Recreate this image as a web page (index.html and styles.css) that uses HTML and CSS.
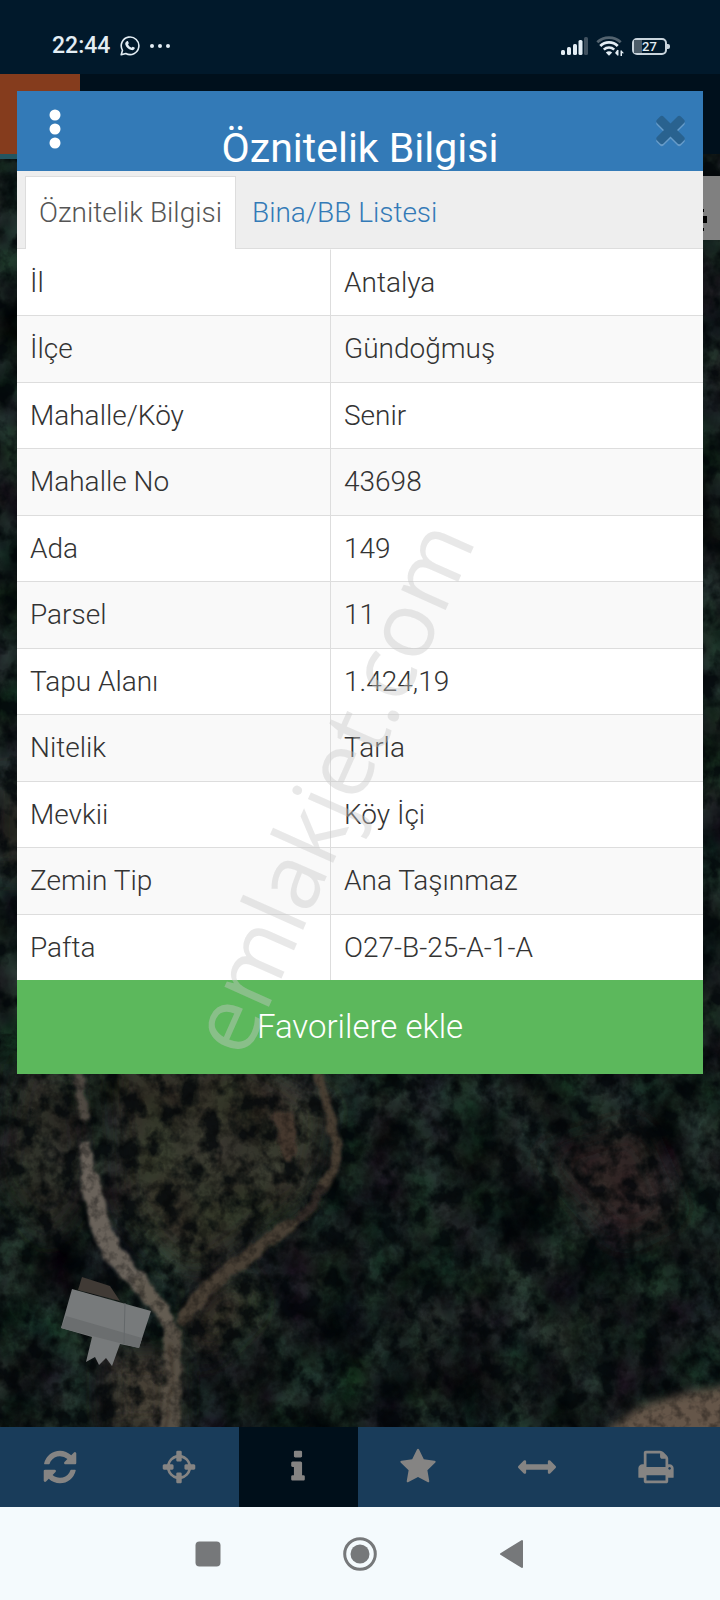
FILE: index.html
```html
<!DOCTYPE html>
<html lang="tr">

<head>
  <meta charset="UTF-8">
  <meta name="viewport" content="width=device-width, initial-scale=1.0">
  <title>Parsel Sorgu - Öznitelik Bilgisi</title>
  <link rel="stylesheet" href="styles.css">
</head>

<body>
  <header class="status-bar">
    <div class="status-left">
      <span class="clock">22:44</span>
      <svg class="status-whatsapp" width="20" height="20" viewBox="0 0 20 20" aria-hidden="true">
        <path d="M1.2 18.8l1.3-4.5a8.8 8.8 0 1 1 3.3 3.2z" fill="none" stroke="currentColor" stroke-width="1.6" stroke-linejoin="round" />
        <path d="M6.9 5.2c.5-.3 1-.2 1.2.3l.7 1.6c.1.4-.6 1.1-.7 1.4.7 1.500 1.800 2.500 3.300 3.200.4-.1 1-1 1.400-.9l1.700.8c.4.2.3.7.1 1.200-.6 1.200-2 1.600-3.300 1.200-3-.9-5.100-2.900-6-5.600-.3-1.200.5-2.600 1.600-3.200z" fill="currentColor" />
      </svg>
      <svg width="20" height="20" viewBox="0 0 20 20" aria-hidden="true">
        <circle cx="2" cy="10" r="2" fill="currentColor" />
        <circle cx="10" cy="10" r="2" fill="currentColor" />
        <circle cx="18" cy="10" r="2" fill="currentColor" />
      </svg>
    </div>
    <div class="status-right">
      <svg width="27" height="18" viewBox="0 0 27 18" aria-hidden="true">
        <rect x="0" y="13" width="4" height="5" rx="1.5" fill="currentColor" />
        <rect x="6" y="10" width="4" height="8" rx="1.5" fill="currentColor" />
        <rect x="12" y="7" width="4" height="11" rx="1.5" fill="currentColor" />
        <rect x="17.5" y="3" width="4" height="15" rx="1.5" fill="currentColor" />
        <rect x="23" y="0" width="4" height="18" rx="1.5" fill="#40515f" />
      </svg>
      <svg width="28" height="20" viewBox="0 0 28 20" aria-hidden="true">
        <g fill="none">
          <path d="M1.300 6.300a17 17 0 0 1 23.400 0" stroke="#53636f" stroke-width="2.800" />
          <path d="M4.300 9.900a12.300 12.300 0 0 1 17.400 0" stroke="currentColor" stroke-width="2.800" />
          <path d="M7.800 13.600a7.500 7.500 0 0 1 10.400 0" stroke="currentColor" stroke-width="2.600" />
        </g>
        <path d="M13 19.800l-3.200-3.400q3.200-2.400 6.400 0z" fill="currentColor" />
        <path d="M21.500 13.500v6l-2.500-2.500zM21 14h1.500v5.500h-1.500zM24.500 14.500h1.500v5.500h-1.500zM25.500 14.500l2.500 2.800h-2.500z" fill="currentColor" />
      </svg>
      <span class="battery"><span class="battery-level">27</span></span>
    </div>
  </header>

  <main class="app">
    <svg class="map" viewBox="0 0 720 1353" preserveAspectRatio="xMidYMid slice" aria-hidden="true">
      <defs>
        <filter id="trees" x="0" y="0" width="100%" height="100%" color-interpolation-filters="sRGB">
          <feTurbulence type="fractalNoise" baseFrequency="0.022 0.018" numOctaves="6" seed="12" />
          <feColorMatrix values="0.16 0.14 0 0 -0.06
                                 0.08 0.30 0 0 -0.06
                                 0.14 0.18 0.06 0 -0.07
                                 0 0 0 0 1" />
        </filter>
        <filter id="shade" x="0" y="0" width="100%" height="100%" color-interpolation-filters="sRGB">
          <feTurbulence type="fractalNoise" baseFrequency="0.05 0.045" numOctaves="4" seed="31" />
          <feColorMatrix values="0 0 0 0 0
                                 0 0 0 0 0.02
                                 0 0 0 0 0.03
                                 4 0 0 0 -1.75" />
        </filter>
        <filter id="grain" x="0" y="0" width="100%" height="100%" color-interpolation-filters="sRGB">
          <feTurbulence type="fractalNoise" baseFrequency="0.11" numOctaves="3" seed="5" />
          <feColorMatrix values="0 0 0 0 0.02
                                 0 0 0 0 0.02
                                 0 0 0 0 0.02
                                 3 0 0 0 -1.3" />
        </filter>
        <filter id="rough" x="-10%" y="-10%" width="120%" height="120%">
          <feTurbulence type="fractalNoise" baseFrequency="0.08" numOctaves="3" seed="4" result="n" />
          <feDisplacementMap in="SourceGraphic" in2="n" scale="9" xChannelSelector="R" yChannelSelector="G" />
          <feGaussianBlur stdDeviation="1.5" />
        </filter>
        <filter id="soft" x="-40%" y="-40%" width="180%" height="180%">
          <feGaussianBlur stdDeviation="14" />
        </filter>
        <filter id="edge" x="-20%" y="-20%" width="140%" height="140%">
          <feGaussianBlur stdDeviation="5" />
        </filter>
      </defs>
      <rect width="720" height="1353" filter="url(#trees)" />

      <!-- bare soil -->
      <g filter="url(#soft)">
        <path d="M110 980L250 980L330 1030L310 1120L200 1200L170 1190L120 1130Z" fill="#4a4034" opacity=".6" />
        <path d="M20 990h60l10 120l-40 60l-50-60Z" fill="#3e372c" opacity=".6" />
        <path d="M540 1080L640 1050L680 1140L620 1170Z" fill="#3a2a27" opacity=".7" />
        <path d="M190 1240l50-40l20 30l-60 60z" fill="#4c4034" opacity=".7" />
        <path d="M110 1280h66v80h-66z" fill="#4a4236" opacity=".9" />
        <path d="M0 700h30v100h-30z" fill="#3f3831" opacity=".6" />
      </g>
      <rect width="720" height="1353" filter="url(#shade)" opacity=".75" />

      <!-- roads -->
      <g fill="none" stroke-linecap="round" stroke-linejoin="round" filter="url(#rough)">
        <path d="M318 1000L328 1032L336 1070L335 1092L322 1115" stroke="#463d33" stroke-width="10" />
        <path d="M322 1115L308 1138L290 1150" stroke="#302c25" stroke-width="9" />
        <path d="M290 1150L262 1172L230 1195L205 1217L182 1244" stroke="#4a4135" stroke-width="14" />
        <path d="M78 990L80 1020L85 1044" stroke="#504a42" stroke-width="9" />
        <path d="M85 1072L90 1105" stroke="#69625a" stroke-width="11" />
        <path d="M90 1105L100 1150L113 1180L140 1210" stroke="#69625a" stroke-width="19" />
        <path d="M140 1210L163 1236L172 1262" stroke="#635b51" stroke-width="14" />
        <path d="M173 1262L173 1300L168 1360" stroke="#575044" stroke-width="17" />
        <path d="M171 1270L172 1300L167 1360" stroke="#41392f" stroke-width="3" />
        <path d="M277 1042L290 1042L294 1070L288 1084Z" stroke="#44382f" stroke-width="8" fill="#44382f" />
      </g>
      <path d="M590 1370L640 1332L690 1318L740 1310V1370Z" fill="#655649" filter="url(#edge)" />
      <rect y="960" width="720" height="393" filter="url(#grain)" opacity=".35" />

      <!-- house -->
      <path d="M78 1216L82 1203L110 1212L120 1227Z" fill="#403a35" />
      <path d="M72 1215L151 1237L139 1274L120 1270L112 1292L106 1284L99 1291L95 1283L86 1288L92 1263L61 1254Z" fill="#777a7b" />
      <path d="M66 1242L142 1264L139 1274L61 1254Z" fill="#6b6e6f" />
      <path d="M125 1229L124 1270" stroke="#64686a" stroke-width="1" />
    </svg>

    <div class="app-header">
      <span class="app-logo"></span>
    </div>
    <button class="map-control" type="button" aria-label="Katmanlar">
      <svg width="40" height="48" viewBox="0 0 40 48" aria-hidden="true">
        <path d="M0 32h34v7H0zM28 25h3v3h-3zM28 44h3v3h-3z" />
      </svg>
    </button>

    <section class="modal" role="dialog" aria-labelledby="modalTitle">
      <div class="modal-header">
        <button class="menu-btn" type="button" aria-label="Menü">
          <svg width="12" height="40" viewBox="0 0 12 40" aria-hidden="true">
            <circle cx="6" cy="6" r="5.500" />
            <circle cx="6" cy="20" r="5.500" />
            <circle cx="6" cy="34" r="5.500" />
          </svg>
        </button>
        <h1 class="modal-title" id="modalTitle">Öznitelik Bilgisi</h1>
        <button class="close-btn" type="button" aria-label="Kapat">
          <svg width="43" height="43" viewBox="0 0 1792 1792" aria-hidden="true">
            <path d="M1490 1322q0 40-28 68l-136 136q-28 28-68 28t-68-28l-294-294-294 294q-28 28-68 28t-68-28l-136-136q-28-28-28-68t28-68l294-294-294-294q-28-28-28-68t28-68l136-136q28-28 68-28t68 28l294 294 294-294q28-28 68-28t68 28l136 136q28 28 28 68t-28 68l-294 294 294 294q28 28 28 68z" />
          </svg>
        </button>
      </div>

      <nav class="tabs">
        <a class="tab active" href="#oznitelik">Öznitelik Bilgisi</a>
        <a class="tab" href="#bina">Bina/BB Listesi</a>
      </nav>

      <table class="info-table" id="oznitelik">
        <tbody>
          <tr><th scope="row">İl</th><td>Antalya</td></tr>
          <tr><th scope="row">İlçe</th><td>Gündoğmuş</td></tr>
          <tr><th scope="row">Mahalle/Köy</th><td>Senir</td></tr>
          <tr><th scope="row">Mahalle No</th><td>43698</td></tr>
          <tr><th scope="row">Ada</th><td>149</td></tr>
          <tr><th scope="row">Parsel</th><td>11</td></tr>
          <tr><th scope="row">Tapu Alanı</th><td>1.424,19</td></tr>
          <tr><th scope="row">Nitelik</th><td>Tarla</td></tr>
          <tr><th scope="row">Mevkii</th><td>Köy İçi</td></tr>
          <tr><th scope="row">Zemin Tip</th><td>Ana Taşınmaz</td></tr>
          <tr><th scope="row">Pafta</th><td>O27-B-25-A-1-A</td></tr>
        </tbody>
      </table>

      <button class="favorite-btn" type="button">Favorilere ekle</button>
    </section>
  </main>

  <nav class="toolbar">
    <button class="tool" type="button" aria-label="Yenile">
      <svg viewBox="0 0 1792 1792" aria-hidden="true"><path d="M1639 1056q0 5-1 7-64 268-268 434.500t-478 166.500q-146 0-282.500-55t-243.500-157l-129 129q-19 19-45 19t-45-19-19-45v-448q0-26 19-45t45-19h448q26 0 45 19t19 45-19 45l-137 137q71 66 161 102t187 36q134 0 250-65t186-179q11-17 53-117 8-23 30-23h192q13 0 22.500 9.500t9.500 22.500zm25-800v448q0 26-19 45t-45 19h-448q-26 0-45-19t-19-45 19-45l138-138q-148-137-349-137-134 0-250 65t-186 179q-11 17-53 117-8 23-30 23h-199q-13 0-22.500-9.500t-9.500-22.500v-7q65-268 270-434.500t480-166.500q146 0 284 55.500t245 156.500l130-129q19-19 45-19t45 19 19 45z" /></svg>
    </button>
    <button class="tool" type="button" aria-label="Konum">
      <svg viewBox="0 0 1792 1792" aria-hidden="true"><path d="M1325 1024h-109q-26 0-45-19t-19-45v-128q0-26 19-45t45-19h109q-32-108-112.500-188.500t-188.500-112.500v109q0 26-19 45t-45 19h-128q-26 0-45-19t-19-45v-109q-108 32-188.500 112.500t-112.500 188.500h109q26 0 45 19t19 45v128q0 26-19 45t-45 19h-109q32 108 112.500 188.500t188.500 112.500v-109q0-26 19-45t45-19h128q26 0 45 19t19 45v109q108-32 188.500-112.500t112.500-188.500zm339-192v128q0 26-19 45t-45 19h-143q-37 161-154.500 278.500t-278.500 154.500v143q0 26-19 45t-45 19h-128q-26 0-45-19t-19-45v-143q-161-37-278.500-154.500t-154.500-278.500h-143q-26 0-45-19t-19-45v-128q0-26 19-45t45-19h143q37-161 154.500-278.500t278.500-154.500v-143q0-26 19-45t45-19h128q26 0 45 19t19 45v143q161 37 278.500 154.500t154.500 278.500h143q26 0 45 19t19 45z" /></svg>
    </button>
    <button class="tool active" type="button" aria-label="Bilgi">
      <svg viewBox="0 0 1792 1792" aria-hidden="true"><path d="M1216 1344v128q0 26-19 45t-45 19h-512q-26 0-45-19t-19-45v-128q0-26 19-45t45-19h64v-384h-64q-26 0-45-19t-19-45v-128q0-26 19-45t45-19h384q26 0 45 19t19 45v576h64q26 0 45 19t19 45zm-128-1152v192q0 26-19 45t-45 19h-256q-26 0-45-19t-19-45v-192q0-26 19-45t45-19h256q26 0 45 19t19 45z" /></svg>
    </button>
    <button class="tool" type="button" aria-label="Favoriler">
      <svg viewBox="0 0 1792 1792" aria-hidden="true"><path d="M1728 647q0 22-26 48l-363 354 86 500q1 7 1 20 0 21-10.500 35.500t-30.500 14.500q-19 0-40-12l-449-236-449 236q-22 12-40 12-21 0-31.500-14.500t-10.500-35.500q0-6 2-20l86-500-364-354q-25-27-25-48 0-37 56-46l502-73 225-455q19-41 49-41t49 41l225 455 502 73q56 9 56 46z" /></svg>
    </button>
    <button class="tool" type="button" aria-label="Ölçüm">
      <svg viewBox="0 0 1792 1792" aria-hidden="true"><path d="M1792 896q0 26-19 45l-256 256q-19 19-45 19t-45-19-19-45v-128h-1024v128q0 26-19 45t-45 19-45-19l-256-256q-19-19-19-45t19-45l256-256q19-19 45-19t45 19 19 45v128h1024v-128q0-26 19-45t45-19 45 19l256 256q19 19 19 45z" /></svg>
    </button>
    <button class="tool" type="button" aria-label="Yazdır">
      <svg viewBox="0 0 1792 1792" aria-hidden="true"><path d="M448 1536h896v-256h-896v256zm0-640h896v-384h-160q-40 0-68-28t-28-68v-160h-640v640zm1152 64q0-26-19-45t-45-19-45 19-19 45 19 45 45 19 45-19 19-45zm128 0v416q0 13-9.500 22.500t-22.500 9.500h-224v160q0 40-28 68t-68 28h-960q-40 0-68-28t-28-68v-160h-224q-13 0-22.500-9.500t-9.500-22.500v-416q0-79 56.500-135.500t135.500-56.500h64v-544q0-40 28-68t68-28h672q40 0 88 20t76 48l152 152q28 28 48 76t20 88v256h64q79 0 135.500 56.500t56.500 135.500z" /></svg>
    </button>
  </nav>

  <footer class="system-nav">
    <button type="button" aria-label="Son uygulamalar">
      <svg width="34" height="34" viewBox="0 0 34 34" aria-hidden="true"><rect x="4.500" y="4.500" width="25" height="25" rx="4" /></svg>
    </button>
    <button type="button" aria-label="Ana ekran">
      <svg width="34" height="34" viewBox="0 0 34 34" aria-hidden="true"><circle cx="17" cy="17" r="15.300" fill="none" stroke="currentColor" stroke-width="3" /><circle cx="17" cy="17" r="9.500" /></svg>
    </button>
    <button type="button" aria-label="Geri">
      <svg width="34" height="34" viewBox="0 0 34 34" aria-hidden="true"><path d="M6 17L27 4V30Z" stroke="currentColor" stroke-width="2" stroke-linejoin="round" /></svg>
    </button>
  </footer>

  <div class="watermark" aria-hidden="true"><span>emlakjet.com</span></div>
</body>

</html>
```

FILE: styles.css
```css
* {
  box-sizing: border-box;
}

body {
  position: relative;
  margin: 0;
  min-height: 100vh;
  display: flex;
  flex-direction: column;
  overflow-x: hidden;
  font-family: Roboto, "Open Sans", sans-serif;
  font-weight: 300;
  font-size: 28px;
  line-height: 40px;
  color: #333;
  background-color: #000f1a;
}

button {
  margin: 0;
  padding: 0;
  border: none;
  background: none;
  font: inherit;
  color: inherit;
  cursor: pointer;
}

svg {
  display: block;
  fill: currentColor;
}

/* Status bar */
.status-bar {
  display: flex;
  justify-content: space-between;
  align-items: center;
  height: 74px;
  padding: 18px 53px 0 52px;
  background-color: #01192b;
  color: #e3edf4;
}

.status-left,
.status-right {
  display: flex;
  align-items: center;
  gap: 8px;
}

.status-left {
  gap: 10px;
}

.clock {
  font-size: 23px;
  font-weight: 500;
}

.battery {
  position: relative;
  display: block;
  width: 35px;
  height: 17px;
  border: 2px solid #c9d4dc;
  border-radius: 5px;
}

.battery::after {
  content: "";
  position: absolute;
  top: 4px;
  right: -5px;
  width: 3px;
  height: 5px;
  border-radius: 0 2px 2px 0;
  background-color: #c9d4dc;
}

.battery-level {
  display: block;
  height: 13px;
  line-height: 13px;
  font-size: 13px;
  font-weight: 500;
  text-align: center;
  background: linear-gradient(to right, #4d5d69 27%, transparent 27%);
}

/* Map */
.app {
  position: relative;
  flex: 1;
  padding: 17px 17px 353px;
  overflow: hidden;
}

.map {
  position: absolute;
  inset: 0;
  width: 100%;
  height: 100%;
}

.app-header {
  position: absolute;
  top: 0;
  left: 0;
  right: 0;
  height: 80px;
  background-color: #00101c;
}

.app-logo {
  display: block;
  width: 80px;
  height: 85px;
  background-color: #853c1d;
  border-bottom: 5px solid #235560;
}

.map-control {
  position: absolute;
  top: 102px;
  right: 0;
  width: 60px;
  height: 64px;
  padding-left: 13px;
  background-color: #808080;
  color: #000;
}

/* Modal */
.modal {
  position: relative;
  background-color: #fff;
}

.modal-header {
  display: grid;
  grid-template-columns: 76px 1fr 76px;
  height: 80px;
  background-color: #337ab7;
  color: #fff;
}

.menu-btn {
  display: flex;
  justify-content: center;
  padding-top: 18px;
}

.modal-title {
  margin: 0;
  padding-top: 34px;
  font-size: 41px;
  line-height: 46px;
  font-weight: 400;
  text-align: center;
}

.close-btn {
  display: flex;
  justify-content: flex-end;
  padding: 16px 11px 0 0;
  color: #29628f;
}

.close-btn svg {
  filter: drop-shadow(0 2px 0 rgba(255, 255, 255, 0.25));
}

.tabs {
  display: flex;
  gap: 2px;
  padding: 5px 8px 0;
  background-color: #eee;
  border-bottom: 1px solid #ddd;
}

.tab {
  margin-bottom: -1px;
  padding: 16px 13px;
  border: 1px solid transparent;
  border-bottom: none;
  color: #337ab7;
  text-decoration: none;
}

.tab.active {
  background-color: #fff;
  border-color: #ddd;
  color: #555;
}

.info-table {
  width: 100%;
  border-collapse: separate;
  border-spacing: 0;
  table-layout: fixed;
}

.info-table th,
.info-table td {
  padding: 13px 13px 12px;
  border-top: 1px solid #ddd;
  font-weight: 300;
  text-align: left;
}

.info-table th {
  width: 314px;
  border-right: 1px solid #ddd;
}

.info-table tr:first-child th,
.info-table tr:first-child td {
  border-top-color: transparent;
}

.info-table tr:nth-child(even) {
  background-color: #f9f9f9;
}

.info-table tr:nth-child(even) th,
.info-table tr:nth-child(even) td {
  padding-bottom: 13px;
}

.favorite-btn {
  display: block;
  width: 100%;
  padding: 26px 0;
  font-size: 33px;
  line-height: 42px;
  color: #fff;
  background-color: #5cb85c;
}

/* Bottom toolbar */
.toolbar {
  display: flex;
  height: 80px;
  padding-right: 4px;
  background-color: #193c5a;
  color: #858483;
}

.tool {
  flex: 1;
  display: flex;
  justify-content: center;
  align-items: center;
}

.tool svg {
  width: 38px;
  height: 38px;
}

.tool.active {
  background-color: #000f1a;
}

/* Android navigation */
.system-nav {
  display: flex;
  justify-content: center;
  align-items: center;
  gap: 52px;
  height: 93px;
  background-color: #f4fafd;
  color: #76787a;
}

.system-nav button {
  display: flex;
  justify-content: center;
  width: 100px;
}

.watermark {
  position: absolute;
  inset: 0;
  display: flex;
  justify-content: center;
  align-items: center;
  padding: 0 62px 28px 0;
  pointer-events: none;
}

.watermark span {
  font-family: "Open Sans", sans-serif;
  font-size: 91px;
  font-weight: 400;
  color: rgba(200, 200, 200, 0.42);
  transform: rotate(-66deg);
}
```
